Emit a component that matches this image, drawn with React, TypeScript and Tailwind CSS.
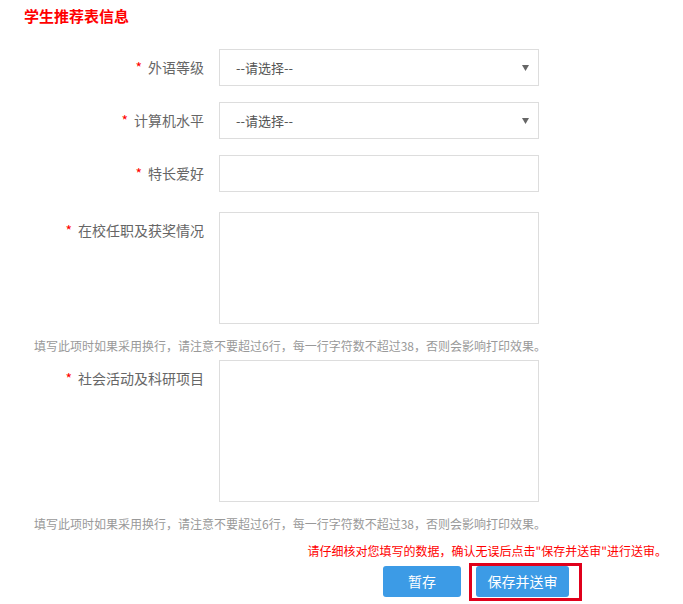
import React from "react";

const FONT = '"Microsoft YaHei", "Noto Sans CJK SC", "Noto Sans", sans-serif';

const HINT = "填写此项时如果采用换行，请注意不要超过6行，每一行字符数不超过38，否则会影响打印效果。";

function Label({ text }: { text: string }) {
  return (
    <div className="w-[204px] shrink-0 h-[37px] leading-[37px] text-right text-[14px] text-[#666]">
      <span className="text-[#f00] mr-[6px]">*</span>
      {text}
    </div>
  );
}

function FakeSelect() {
  return (
    <div className="w-[320px] h-[37px] border border-[#ddd] bg-white flex items-center justify-between pl-[16px] pr-[9px] text-[13px] text-[#555]">
      <span>--请选择--</span>
      <svg width="7" height="6" viewBox="0 0 7 6">
        <path d="M0 0 H7 L3.5 6 Z" fill="#666" />
      </svg>
    </div>
  );
}

export default function App() {
  return (
    <div className="w-[683px] h-[604px] bg-white overflow-hidden" style={{ fontFamily: FONT }}>
      {/* ── Title ─────────────────────────── */}
      <div className="pl-[24px] pt-[6px] h-[49px] text-[15px] leading-[20px] font-bold text-[#f00]">
        学生推荐表信息
      </div>

      {/* ── Form rows ─────────────────────── */}
      <div className="flex flex-col">
        <div className="flex items-start gap-[15px]">
          <Label text="外语等级" />
          <FakeSelect />
        </div>
        <div className="flex items-start gap-[15px] mt-[16px]">
          <Label text="计算机水平" />
          <FakeSelect />
        </div>
        <div className="flex items-start gap-[15px] mt-[16px]">
          <Label text="特长爱好" />
          <div className="w-[320px] h-[37px] border border-[#ddd] bg-white" />
        </div>
        <div className="flex items-start gap-[15px] mt-[20px]">
          <Label text="在校任职及获奖情况" />
          <div className="w-[320px] h-[112px] border border-[#ddd] bg-white" />
        </div>
        <div className="pl-[34px] mt-[12px] h-[20px] leading-[20px] text-[12px] text-[#999]">{HINT}</div>
        <div className="flex items-start gap-[15px] mt-[4px]">
          <Label text="社会活动及科研项目" />
          <div className="w-[320px] h-[142px] border border-[#ddd] bg-white" />
        </div>
        <div className="pl-[34px] mt-[12px] h-[20px] leading-[20px] text-[12px] text-[#999]">{HINT}</div>
      </div>

      {/* ── Submit area ───────────────────── */}
      <div className="mt-[7px] pr-[16px] h-[20px] leading-[20px] text-right text-[12px] text-[#f00]">
        请仔细核对您填写的数据，确认无误后点击"保存并送审"进行送审。
      </div>
      <div className="flex items-start pl-[383px] mt-[2px] gap-[8px]">
        <button className="mt-[3px] w-[78px] h-[31px] rounded-[3px] bg-[#3c9be6] text-white text-[14px]">暂存</button>
        <div className="border-[3px] border-[#e0001b] pt-0 pb-[1px] pl-[4px] pr-[10px]">
          <button className="w-[93px] h-[31px] rounded-[3px] bg-[#3c9be6] text-white text-[14px] block">保存并送审</button>
        </div>
      </div>
    </div>
  );
}
